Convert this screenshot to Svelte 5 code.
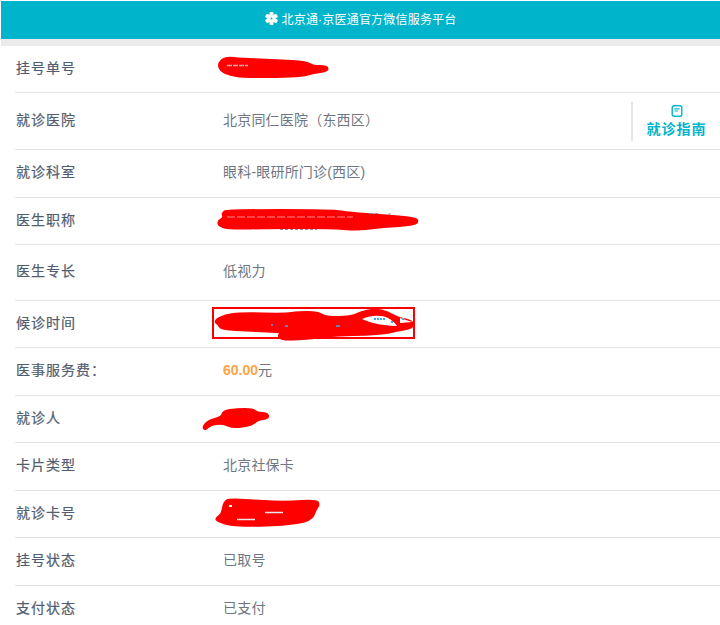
<script lang="ts">
	const rows = [
		{ label: '挂号单号', value: '', size: 'normal' },
		{ label: '就诊医院', value: '北京同仁医院（东西区）', size: 'tall', guide: true },
		{ label: '就诊科室', value: '眼科-眼研所门诊(西区)', size: 'normal' },
		{ label: '医生职称', value: '', size: 'normal' },
		{ label: '医生专长', value: '低视力', size: 'mid' },
		{ label: '候诊时间', value: '', size: 'normal' },
		{ label: '医事服务费：', value: '', fee: '60.00', size: 'normal' },
		{ label: '就诊人', value: '', size: 'normal' },
		{ label: '卡片类型', value: '北京社保卡', size: 'normal' },
		{ label: '就诊卡号', value: '', size: 'normal' },
		{ label: '挂号状态', value: '已取号', size: 'normal' },
		{ label: '支付状态', value: '已支付', size: 'normal' }
	];

	// hand-drawn red scribbles that hide private data
	const blobs = [
		'218,64 225,57 243,59 277,60 307,62 313,66 327,66 328,71 313,73 303,76 277,77 243,77 230,75 221,71',
		'222,213 227,210 333,210 350,213 383,215 415,218 418,221 415,225 383,227 357,230 343,229 330,228 270,228 230,229 219,226 218,221 224,218',
		'214,321 225,315 241,313 285,314 298,312 318,312 325,317 351,317 361,312 375,309 388,312 398,318 413,321 413,328 395,331 388,333 365,335 341,335 305,339 281,340 278,335 283,332 251,331 221,329 219,325',
		'203,427 208,421 222,417 223,411 237,409 253,409 257,413 267,413 269,418 257,420 252,425 233,428 223,423 210,425 205,430',
		'224,502 230,499 260,501 287,502 317,500 319,505 316,509 311,521 283,525 250,526 230,525 217,521 216,518 222,514'
	];

	// closes a polygon with curves through the midpoints of its sides
	function smooth(points: string) {
		const pts = points.split(' ').map((p) => p.split(',').map(Number));
		const mid = (a: number[], b: number[]) => [(a[0] + b[0]) / 2, (a[1] + b[1]) / 2];
		const start = mid(pts[pts.length - 1], pts[0]);
		let d = `M${start[0]} ${start[1]}`;
		pts.forEach((p, i) => {
			const m = mid(p, pts[(i + 1) % pts.length]);
			d += `Q${p[0]} ${p[1]} ${m[0]} ${m[1]}`;
		});
		return d + 'Z';
	}
</script>

<div class="page">
	<header class="top">
		<svg class="star" viewBox="0 0 12 12" aria-hidden="true">
			<g fill="#fff">
				<rect x="4.2" y="0" width="3.6" height="12" rx="1" />
				<rect x="4.2" y="0" width="3.6" height="12" rx="1" transform="rotate(60 6 6)" />
				<rect x="4.2" y="0" width="3.6" height="12" rx="1" transform="rotate(120 6 6)" />
			</g>
			<circle cx="6" cy="6" r="0.9" fill="#00b5cb" />
		</svg>
		<span>北京通·京医通官方微信服务平台</span>
	</header>
	<div class="band"></div>

	<ul class="list">
		{#each rows as row}
			<li class="row {row.size}">
				<span class="label">{row.label}</span>
				<span class="value">
					{#if row.fee}<b class="fee">{row.fee}</b>元{:else}{row.value}{/if}
				</span>
				{#if row.guide}
					<div class="guide">
						<svg viewBox="0 0 12 12" aria-hidden="true">
							<rect x="1.2" y="0.8" width="9.6" height="10.4" rx="1.8" fill="none" stroke="#00b5cb" stroke-width="1.4" />
							<path d="M3.4 3.8h5.2M3.4 6h3.4" fill="none" stroke="#00b5cb" stroke-width="1.2" />
						</svg>
						<span>就诊指南</span>
					</div>
				{/if}
			</li>
		{/each}
	</ul>

	<svg class="marks" viewBox="0 0 720 625" aria-hidden="true">
		{#each blobs as points}
			<path d={smooth(points)} fill="#f00" stroke="#f00" stroke-width="2" stroke-linejoin="round" />
		{/each}
		<path d="M227 65.5h21" stroke="#d5a8b0" stroke-width="1.5" stroke-dasharray="5 1" />
		<path d="M227 217h126" stroke="#f08a8a" stroke-width="1" stroke-dasharray="8 2" />
		<path d="M370 213.500h10M388 214h5M280 229.500h37" stroke="#8a8f98" stroke-width="1" stroke-dasharray="3 2" />

		<!-- gap under the arch, with bits of blue text showing -->
		<path d="M362 319c6-3 18-5 26-1 4 2 7 5 9 8-10 0-24-2-35-7z" fill="#fff" />
		<path d="M374 319h12M391 322h3" stroke="#3aaee6" stroke-width="2" stroke-dasharray="2 1" />
		<path d="M400 318l12 4-12 1z" fill="#fff" />
		<path d="M402 319h2" stroke="#3aaee6" stroke-width="2" />
		<path d="M271 325h2M285 326h3M336 326h4" stroke="#3aaee6" stroke-width="1.500" />

		<path d="M237 519.500h18M265 512.500h18" stroke="#e8e8ec" stroke-width="1.500" />
		<path d="M229 506h3" stroke="#fff" stroke-width="2" />

		<rect x="213" y="308" width="201" height="30" fill="none" stroke="#f00" stroke-width="2" />
	</svg>
</div>

<style>
	:global(body) {
		margin: 0;
		background: #fff;
		overflow: hidden;
	}

	.page {
		position: relative;
		height: 625px;
		overflow: hidden;
		padding-top: 1px;
		box-sizing: border-box;
		font-family: 'Liberation Sans', 'Noto Sans CJK SC', sans-serif;
	}

	.top {
		display: flex;
		align-items: center;
		justify-content: center;
		gap: 4px;
		height: 38px;
		padding-bottom: 3px;
		box-sizing: border-box;
		margin-left: 1px;
		background: #00b5cb;
		color: #fff;
		font-size: 12px;
		letter-spacing: 0.2px;
	}

	.star {
		width: 13px;
		height: 13px;
	}

	.band {
		height: 6.5px;
		margin-left: 1px;
		background: #ebebeb;
	}

	.list {
		list-style: none;
		margin: 0;
		padding: 0 0 0 15px;
	}

	.row {
		display: flex;
		align-items: center;
		height: 47.5px;
		padding-bottom: 4px;
		box-sizing: border-box;
		border-bottom: 1px solid #e3e3e3;
	}

	.row.tall {
		height: 57px;
	}

	.row.mid {
		height: 55.5px;
	}

	.label {
		flex: 0 0 208px;
		padding-left: 1px;
		box-sizing: border-box;
		font-size: 14px;
		letter-spacing: 1px;
		color: #515c6e;
		-webkit-text-stroke: 0.2px #515c6e;
	}

	.value {
		flex: 1;
		font-size: 14px;
		letter-spacing: 0.2px;
		color: #6d7682;
	}

	.fee {
		color: #fda545;
		font-weight: 700;
		letter-spacing: 0;
	}

	.guide {
		display: flex;
		flex-direction: column;
		align-items: center;
		justify-content: center;
		gap: 1px;
		width: 87px;
		height: 39px;
		margin-top: 4px;
		border-left: 2px solid #e6e6e6;
		color: #00b5cb;
		font-size: 14px;
		font-weight: 700;
		letter-spacing: 1px;
	}

	.guide svg {
		width: 12px;
		height: 12px;
	}

	.marks {
		position: absolute;
		inset: 0;
		width: 720px;
		height: 625px;
	}
</style>
